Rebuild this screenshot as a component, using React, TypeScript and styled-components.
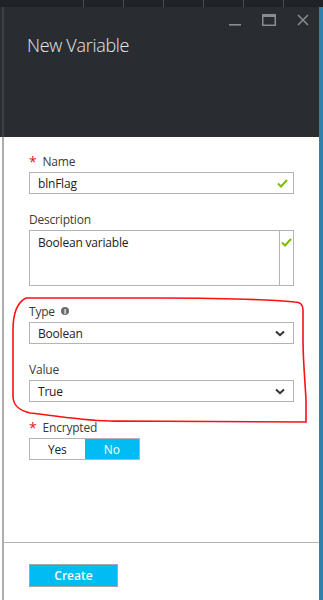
import { createGlobalStyle, styled } from "styled-components";

const GlobalStyle = createGlobalStyle`
  * {
    box-sizing: border-box;
  }
  body {
    margin: 0;
    background: #fff;
    font-family: "Segoe UI", "Open Sans", "Noto Sans", sans-serif;
  }
`;

const CheckIcon = () => (
  <svg width="11" height="9" viewBox="0 0 11 9">
    <path d="M1 4.5 L4 7.5 L10 1" fill="none" stroke="#7fba00" strokeWidth="2" />
  </svg>
);

const Chevron = () => (
  <svg width="10" height="7" viewBox="0 0 10 7">
    <path d="M1 1.5 L5 5.2 L9 1.5" fill="none" stroke="#333" strokeWidth="2" />
  </svg>
);

const App = () => {
  return (
    <>
      <GlobalStyle />
      <Frame>
        <TopStrip>
          {[0, 1, 2, 3, 4, 5].map((i) => (
            <StripCell key={i} />
          ))}
        </TopStrip>
        <Panel>
          <Header>
            <Controls>
              <svg width="12" height="12" viewBox="0 0 12 12">
                <rect x="0" y="10" width="12" height="1.6" fill="#8a8d90" />
              </svg>
              <svg width="14" height="12" viewBox="0 0 14 12">
                <rect x="0.75" y="0.75" width="12.5" height="10.5" fill="none" stroke="#8a8d90" strokeWidth="1.5" />
                <rect x="0" y="0" width="14" height="3" fill="#8a8d90" />
              </svg>
              <svg width="12" height="12" viewBox="0 0 12 12">
                <path d="M1 1 L11 11 M11 1 L1 11" stroke="#8a8d90" strokeWidth="1.5" />
              </svg>
            </Controls>
            <Title>New Variable</Title>
          </Header>

          <Body>
            <Field>
              <Label>
                <Required>*</Required>Name
              </Label>
              <TextBox>
                <span>blnFlag</span>
                <CheckIcon />
              </TextBox>
            </Field>

            <Field>
              <Label>Description</Label>
              <TextArea>
                <AreaText>Boolean variable</AreaText>
                <AreaSide>
                  <CheckIcon />
                </AreaSide>
              </TextArea>
            </Field>

            <Field>
              <Label>
                Type
                <InfoDot>i</InfoDot>
              </Label>
              <Select>
                <span>Boolean</span>
                <Chevron />
              </Select>
            </Field>

            <Field>
              <Label>Value</Label>
              <Select>
                <span>True</span>
                <Chevron />
              </Select>
            </Field>

            <Field>
              <Label>
                <Required>*</Required>Encrypted
              </Label>
              <Toggle>
                <ToggleOption>Yes</ToggleOption>
                <ToggleOption $active>No</ToggleOption>
              </Toggle>
            </Field>
          </Body>

          <Footer>
            <CreateBtn>Create</CreateBtn>
          </Footer>
        </Panel>

        {/* red hand-drawn marker around Type / Value */}
        <Annotation width="323" height="600" viewBox="0 0 323 600">
          <path
            d="M26 298 C18 302 13 312 13 330 L13 396 C13 405 18 410 30 413 C60 416 90 422 120 421 L306 422 L306 400 C305 380 303 360 303 340 L303 310 C303 304 300 302 295 302 C250 298 200 298 160 298 L26 298 Z"
            fill="none"
            stroke="#ff1010"
            strokeWidth="1.6"
          />
        </Annotation>
      </Frame>
    </>
  );
};

export default App;

const Frame = styled.div`
  position: relative;
  width: 323px;
  height: 600px;
  display: flex;
  flex-direction: column;
  overflow: hidden;
  background: linear-gradient(#292d32 0 137px, #fff 137px);
  letter-spacing: -0.2px;
`;

const TopStrip = styled.div`
  height: 7px;
  display: flex;
  padding-left: 83px;
  background: #1f2226;
`;

const StripCell = styled.div`
  width: 41px;
  border-left: 1px solid #4a4e53;
`;

const Panel = styled.div`
  flex: 1;
  margin-left: 2px;
  display: flex;
  flex-direction: column;
  border-right: 4px solid #2f80ac;
`;

const Header = styled.div`
  height: 130px;
  padding: 7px 10px 0 23px;
  background: #292d32;
  border-left: 2px solid #3d4146;
`;

const Controls = styled.div`
  display: flex;
  justify-content: flex-end;
  align-items: flex-end;
  gap: 21px;
  height: 12px;
`;

const Title = styled.div`
  margin-top: 7px;
  color: #e8e8e8;
  font-size: 18px;
  font-weight: 300;
  line-height: 24px;
  letter-spacing: -0.3px;
`;

const Body = styled.div`
  flex: 1;
  padding: 15px 25px 0 25px;
  border-left: 2px solid #adadad;
  display: flex;
  flex-direction: column;
  gap: 16px;
`;

const Field = styled.div`
  display: flex;
  flex-direction: column;
`;

const Label = styled.div`
  display: flex;
  align-items: center;
  height: 18px;
  margin-bottom: 2px;
  color: #3a3a3a;
  font-size: 12px;
`;

const Required = styled.span`
  color: #e81123;
  font-size: 14px;
  margin-right: 6px;
`;

const InfoDot = styled.span`
  display: inline-flex;
  align-items: center;
  justify-content: center;
  width: 8px;
  height: 8px;
  margin-left: 6px;
  border-radius: 50%;
  background: #6b6b6b;
  color: #fff;
  font-size: 7px;
  font-weight: 700;
  line-height: 1;
`;

const TextBox = styled.div`
  height: 22px;
  display: flex;
  align-items: center;
  justify-content: space-between;
  padding: 0 5px 0 8px;
  border: 1px solid #b4b4b4;
  color: #222;
  font-size: 12px;
`;

const TextArea = styled.div`
  height: 56px;
  display: flex;
  border: 1px solid #b4b4b4;
`;

const AreaText = styled.div`
  flex: 1;
  padding: 4px 8px;
  color: #222;
  font-size: 12px;
  line-height: 16px;
`;

const AreaSide = styled.div`
  width: 14px;
  display: flex;
  align-items: flex-start;
  padding: 7px 0 0 1px;
  border-left: 1px solid #b4b4b4;
`;

const Select = styled.div`
  height: 22px;
  display: flex;
  align-items: center;
  justify-content: space-between;
  padding: 0 8px;
  border: 1px solid #b4b4b4;
  color: #222;
  font-size: 12px;
`;

const Toggle = styled.div`
  display: flex;
  width: 111px;
  height: 22px;
  border: 1px solid #b4b4b4;
`;

const ToggleOption = styled.div<{ $active?: boolean }>`
  flex: 1;
  display: flex;
  align-items: center;
  justify-content: center;
  font-size: 12px;
  color: ${(p) => (p.$active ? "#fff" : "#222")};
  background: ${(p) => (p.$active ? "#00bcf2" : "#fff")};
`;

const Footer = styled.div`
  height: 58px;
  padding: 20px 0 0 25px;
  border-top: 1px solid #b4b4b4;
  border-left: 2px solid #adadad;
  background: #fff;
`;

const CreateBtn = styled.button`
  width: 89px;
  height: 23px;
  padding: 0;
  border: 1px solid #a5a5a5;
  background: #00bcf2;
  color: #fff;
  font-family: inherit;
  font-size: 12px;
  font-weight: 600;
`;

const Annotation = styled.svg`
  position: absolute;
  left: 0;
  top: 0;
  pointer-events: none;
`;
